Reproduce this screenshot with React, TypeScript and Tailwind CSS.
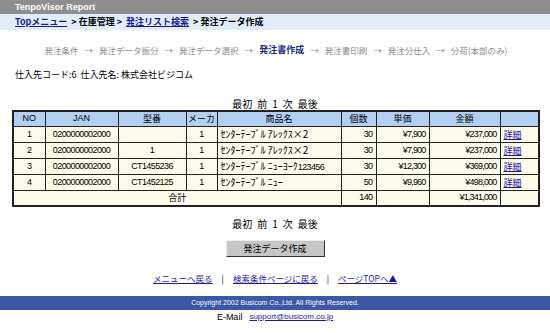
const rows = [
  { no: 1, jan: '0200000002000', model: '', maker: 1, name: 'ｾﾝﾀｰﾃｰﾌﾞﾙ ｱﾚｯｸｽ×2', code: '', qty: 30, price: '¥7,900', amount: '¥237,000' },
  { no: 2, jan: '0200000002000', model: '1', maker: 1, name: 'ｾﾝﾀｰﾃｰﾌﾞﾙ ｱﾚｯｸｽ×2', code: '', qty: 30, price: '¥7,900', amount: '¥237,000' },
  { no: 3, jan: '0200000002000', model: 'CT1455236', maker: 1, name: 'ｾﾝﾀｰﾃｰﾌﾞﾙ ﾆｭｰﾖｰｸ', code: '123456', qty: 30, price: '¥12,300', amount: '¥369,000' },
  { no: 4, jan: '0200000002000', model: 'CT1452125', maker: 1, name: 'ｾﾝﾀｰﾃｰﾌﾞﾙ ﾆｭｰ', code: '', qty: 50, price: '¥9,960', amount: '¥498,000' },
];

const steps = ['発注条件', '発注データ振分', '発注データ選択', '発注書作成', '発注書印刷', '発注分仕入', '分荷(本部のみ)'];

const latin = { fontFamily: '"Liberation Sans", "Noto Sans CJK JP", sans-serif' };

function Pager() {
  return (
    <div className="h-[10px] flex justify-center gap-[5px] text-[10px] text-black leading-[10px]">
      <span>最初</span>
      <span>前</span>
      <span>1</span>
      <span>次</span>
      <span>最後</span>
    </div>
  );
}

export default function App() {
  const th = 'border border-[#222] font-normal text-center px-0 whitespace-nowrap';
  const td = 'border border-[#222] px-[3px] py-0';
  const num = 'text-[9px] tracking-[-0.6px]';
  const yen = 'text-[9px] tracking-[-0.8px]';
  return (
    <div
      className="w-[550px] h-[333px] overflow-hidden bg-white text-[10px] text-black"
      style={{ fontFamily: '"Noto Sans CJK JP", "Liberation Sans", sans-serif' }}
    >
      {/* header */}
      <div className="h-[14px] bg-[#8e8e8e] pl-[15px] text-white font-bold text-[9px] leading-[14px]" style={latin}>
        TenpoVisor Report
      </div>
      <div className="h-[16px] bg-[#e1edf9] pl-[15px] text-[9px] leading-[16px] font-bold flex gap-[4px]">
        <a className="text-[#1a1a9a] underline">Topメニュー</a>
        <span>&gt; 在庫管理 &gt;</span>
        <a className="text-[#1a1a9a] underline">発注リスト検索</a>
        <span>&gt; 発注データ作成</span>
      </div>

      {/* steps */}
      <div className="mt-[13px] h-[14px] flex justify-center pl-[2px] gap-[6px] text-[8.5px] leading-[14px] text-[#8a8a8a]">
        {steps.map((s, i) => (
          <span key={s} className="flex gap-[6px]">
            {i > 0 && <span>→</span>}
            <span className={s === '発注書作成' ? 'font-bold text-[#1b2b80] text-[9px]' : ''}>{s}</span>
          </span>
        ))}
      </div>

      <div className="mt-[11px] h-[14px] pl-[15px] text-[9px] leading-[14px]">仕入先コード:6&nbsp; 仕入先名: 株式会社ビジコム</div>

      <div className="mt-[17px]">
        <Pager />
      </div>

      {/* table */}
      <div className="mt-[1px] px-[12px]">
        <table className="w-[526px] border-collapse border-2 border-[#222] text-[10px] leading-none table-fixed">
          <colgroup>
            <col className="w-[32px]" />
            <col className="w-[73px]" />
            <col className="w-[68px]" />
            <col className="w-[31px]" />
            <col className="w-[124px]" />
            <col className="w-[35px]" />
            <col className="w-[53px]" />
            <col className="w-[71px]" />
            <col className="w-[39px]" />
          </colgroup>
          <thead>
            <tr className="bg-[#b3cff2] h-[15px] text-[9px]">
              <th className={th} style={latin}>NO</th>
              <th className={th} style={latin}>JAN</th>
              <th className={th}>型番</th>
              <th className={th}>メーカ</th>
              <th className={th}>商品名</th>
              <th className={th}>個数</th>
              <th className={th}>単価</th>
              <th className={th}>金額</th>
              <th className={th}></th>
            </tr>
          </thead>
          <tbody className="bg-[#fcfbe9]">
            {rows.map(r => (
              <tr key={r.no} className="h-[16px]">
                <td className={`${td} ${num} text-center`} style={latin}>{r.no}</td>
                <td className={`${td} ${num} text-center`} style={latin}>{r.jan}</td>
                <td className={`${td} ${num} text-center`} style={latin}>{r.model}</td>
                <td className={`${td} ${num} text-center`} style={latin}>{r.maker}</td>
                <td className={`${td} whitespace-nowrap overflow-hidden`}>
                  {r.name}
                  {r.code && <span className={num} style={latin}>{r.code}</span>}
                </td>
                <td className={`${td} ${num} text-right`} style={latin}>{r.qty}</td>
                <td className={`${td} ${yen} text-right`} style={latin}>{r.price}</td>
                <td className={`${td} ${yen} text-right`} style={latin}>{r.amount}</td>
                <td className={`${td} text-[9px]`}><a className="text-[#1a1a9a] underline">詳細</a></td>
              </tr>
            ))}
            <tr className="h-[16px]">
              <td className={`${td} text-center text-[9px]`} colSpan={5}>合計</td>
              <td className={`${td} ${num} text-right`} style={latin}>140</td>
              <td className={td}></td>
              <td className={`${td} ${yen} text-right`} style={latin}>¥1,341,000</td>
              <td className={td}></td>
            </tr>
          </tbody>
        </table>
      </div>

      <div className="mt-[12px]">
        <Pager />
      </div>

      <div className="mt-[11px] flex justify-center">
        <button className="w-[99px] h-[17px] bg-[#c6c6c6] border border-t-[#eee] border-l-[#eee] border-r-[#333] border-b-[#333] text-[9px] leading-none text-black">
          発注データ作成
        </button>
      </div>

      <div className="mt-[14px] h-[14px] flex justify-center gap-[9px] text-[8.5px] leading-[14px]">
        <a className="text-[#1a1a9a] underline">メニューへ戻る</a>
        <span>|</span>
        <a className="text-[#1a1a9a] underline">検索条件ページに戻る</a>
        <span>|</span>
        <a className="text-[#1a1a9a] underline">ページTOPへ▲</a>
      </div>

      <div className="mt-[11px] h-[14px] bg-[#3b57a7] text-white text-center text-[7px] leading-[14px]" style={latin}>
        Copyright 2002 Busicom Co.,Ltd. All Rights Reserved.
      </div>
      <div className="mt-[1px] h-[12px] flex justify-center gap-[7px] leading-[12px]" style={latin}>
        <span className="text-[9px]">E-Mail</span>
        <a className="text-[#1a1a9a] underline text-[8px]">support@busicom.co.jp</a>
      </div>
    </div>
  );
}
